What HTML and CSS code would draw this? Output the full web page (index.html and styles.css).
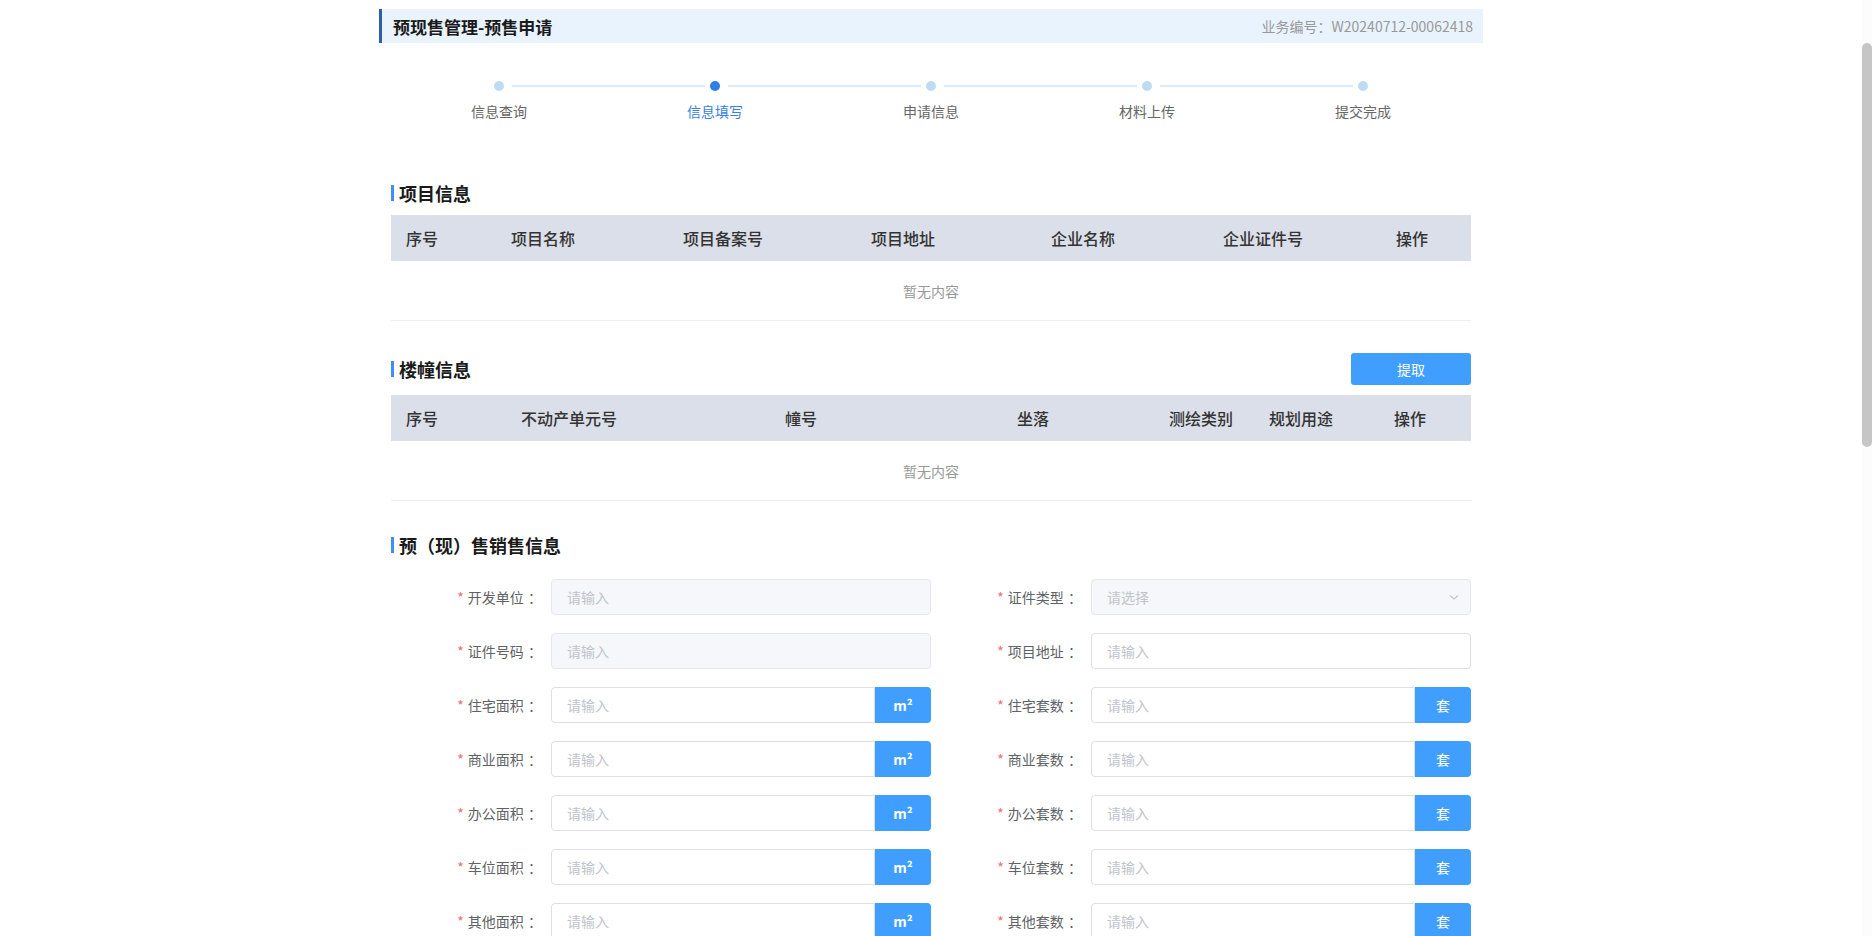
FILE: index.html
```html
<!DOCTYPE html>
<html lang="zh-CN">
<head>
<meta charset="utf-8">
<title>预现售管理-预售申请</title>
<link rel="stylesheet" href="styles.css">
</head>
<body>
<div class="app">
  <div class="page">
    <div class="top">
      <div class="titlebar">
        <div class="title">预现售管理-预售申请</div>
        <div class="bizno">业务编号：W20240712-00062418</div>
      </div>
    </div>
    <div class="scroll">
      <div class="main">
        <div class="steps">
          <div class="step"><span class="dot"></span><span class="label">信息查询</span></div>
          <div class="step active"><span class="dot"></span><span class="label">信息填写</span></div>
          <div class="step"><span class="dot"></span><span class="label">申请信息</span></div>
          <div class="step"><span class="dot"></span><span class="label">材料上传</span></div>
          <div class="step"><span class="dot"></span><span class="label">提交完成</span></div>
        </div>

        <section class="section first">
          <div class="sec-head"><h3 class="sec-title">项目信息</h3></div>
          <div class="table t1">
            <div class="thead">
              <div>序号</div><div>项目名称</div><div>项目备案号</div><div>项目地址</div><div>企业名称</div><div>企业证件号</div><div>操作</div>
            </div>
            <div class="empty">暂无内容</div>
          </div>
        </section>

        <section class="section">
          <div class="sec-head"><h3 class="sec-title">楼幢信息</h3><button class="btn">提取</button></div>
          <div class="table t2">
            <div class="thead">
              <div>序号</div><div>不动产单元号</div><div>幢号</div><div>坐落</div><div>测绘类别</div><div>规划用途</div><div>操作</div>
            </div>
            <div class="empty">暂无内容</div>
          </div>
        </section>

        <section class="section">
          <div class="sec-head"><h3 class="sec-title">预（现）售销售信息</h3></div>
          <div class="form">
            <div class="item"><label class="lbl"><span class="req">*</span>开发单位 <span class="colon">：</span></label><div class="ctl"><input class="inp" disabled placeholder="请输入"></div></div>
            <div class="item"><label class="lbl"><span class="req">*</span>证件类型 <span class="colon">：</span></label><div class="ctl"><div class="select"><span>请选择</span><svg class="chev" width="12" height="12" viewBox="0 0 12 12"><path d="M2 4.5 L6 8 L10 4.5" fill="none" stroke="#c0c4cc" stroke-width="1.1"/></svg></div></div></div>

            <div class="item"><label class="lbl"><span class="req">*</span>证件号码 <span class="colon">：</span></label><div class="ctl"><input class="inp" disabled placeholder="请输入"></div></div>
            <div class="item"><label class="lbl"><span class="req">*</span>项目地址 <span class="colon">：</span></label><div class="ctl"><input class="inp" placeholder="请输入"></div></div>

            <div class="item"><label class="lbl"><span class="req">*</span>住宅面积 <span class="colon">：</span></label><div class="ctl unit-ctl"><input class="inp" placeholder="请输入"><span class="unit sq">m²</span></div></div>
            <div class="item"><label class="lbl"><span class="req">*</span>住宅套数 <span class="colon">：</span></label><div class="ctl unit-ctl"><input class="inp" placeholder="请输入"><span class="unit">套</span></div></div>

            <div class="item"><label class="lbl"><span class="req">*</span>商业面积 <span class="colon">：</span></label><div class="ctl unit-ctl"><input class="inp" placeholder="请输入"><span class="unit sq">m²</span></div></div>
            <div class="item"><label class="lbl"><span class="req">*</span>商业套数 <span class="colon">：</span></label><div class="ctl unit-ctl"><input class="inp" placeholder="请输入"><span class="unit">套</span></div></div>

            <div class="item"><label class="lbl"><span class="req">*</span>办公面积 <span class="colon">：</span></label><div class="ctl unit-ctl"><input class="inp" placeholder="请输入"><span class="unit sq">m²</span></div></div>
            <div class="item"><label class="lbl"><span class="req">*</span>办公套数 <span class="colon">：</span></label><div class="ctl unit-ctl"><input class="inp" placeholder="请输入"><span class="unit">套</span></div></div>

            <div class="item"><label class="lbl"><span class="req">*</span>车位面积 <span class="colon">：</span></label><div class="ctl unit-ctl"><input class="inp" placeholder="请输入"><span class="unit sq">m²</span></div></div>
            <div class="item"><label class="lbl"><span class="req">*</span>车位套数 <span class="colon">：</span></label><div class="ctl unit-ctl"><input class="inp" placeholder="请输入"><span class="unit">套</span></div></div>

            <div class="item"><label class="lbl"><span class="req">*</span>其他面积 <span class="colon">：</span></label><div class="ctl unit-ctl"><input class="inp" placeholder="请输入"><span class="unit sq">m²</span></div></div>
            <div class="item"><label class="lbl"><span class="req">*</span>其他套数 <span class="colon">：</span></label><div class="ctl unit-ctl"><input class="inp" placeholder="请输入"><span class="unit">套</span></div></div>
          </div>
        </section>
      </div>
    </div>
  </div>
  <div class="rail"><div class="thumb"></div></div>
</div>
</body>
</html>
```
FILE: styles.css
```css
html, body {
  margin: 0;
  height: 100%;
}
body {
  font-family: "Noto Sans CJK SC", "Noto Sans", sans-serif;
  color: #333;
  background: #fff;
  overflow: hidden;
}
.app {
  height: 100vh;
  display: flex;
}
.page {
  flex: 1;
  min-width: 0;
  display: flex;
  flex-direction: column;
}
.rail {
  flex: none;
  width: 10px;
  padding-top: 43px;
  box-sizing: border-box;
  background: #fcfcfc;
}
.thumb {
  height: 404px;
  border-radius: 5px;
  background: #c6c6c6;
}
.top {
  flex: none;
  height: 43px;
  padding-top: 9px;
  box-sizing: border-box;
}
.titlebar {
  width: 1104px;
  height: 34px;
  margin: 0 auto;
  box-sizing: border-box;
  background: #e8f3fe;
  border-left: 3px solid #2d5ea9;
  padding: 0 10px 0 11px;
  display: flex;
  align-items: center;
  justify-content: space-between;
}
.title {
  font-size: 17px;
  font-weight: 700;
  color: #1a1a1a;
}
.bizno {
  font-size: 14px;
  color: #999;
}
.scroll {
  flex: 1;
  overflow: hidden;
}
.main {
  width: 1104px;
  margin: 0 auto;
  padding: 0 12px;
  box-sizing: border-box;
}

/* steps */
.steps {
  display: flex;
  padding-top: 38px;
}
.step {
  flex: 1;
  position: relative;
  display: flex;
  flex-direction: column;
  align-items: center;
}
.step .dot {
  width: 10px;
  height: 10px;
  border-radius: 50%;
  background: #bcdcf6;
}
.step .label {
  margin-top: 10px;
  font-size: 14px;
  line-height: 20px;
  color: #666;
}
.step.active .dot {
  background: #2f7fe8;
}
.step.active .label {
  color: #3a7fdf;
}
.step:not(:last-child)::after {
  content: "";
  position: absolute;
  top: 4px;
  height: 2px;
  left: calc(50% + 13px);
  right: calc(-50% + 10px);
  background: #deebf6;
}

/* sections */
.section {
  margin-top: 32px;
}
.section.first {
  margin-top: 60px;
}
.sec-head {
  display: flex;
  align-items: center;
  justify-content: space-between;
  margin-bottom: 10px;
  min-height: 24px;
}
.sec-title {
  margin: 0;
  display: flex;
  align-items: center;
  font-size: 18px;
  line-height: 24px;
  font-weight: 700;
  color: #1a1a1a;
}
.sec-title::before {
  content: "";
  width: 3px;
  height: 16px;
  background: #3f8ef0;
  margin-right: 5px;
}
.btn {
  width: 120px;
  height: 32px;
  border: 0;
  border-radius: 3px;
  background: #409eff;
  color: #fff;
  font-size: 14px;
  font-family: inherit;
  cursor: pointer;
}

/* tables */
.table {
  border-bottom: 1px solid #ebeef5;
}
.thead {
  display: grid;
  height: 46px;
  align-items: center;
  background: #dadfe9;
  text-align: center;
  font-size: 16px;
  font-weight: 500;
  color: #333;
}
.t1 .thead {
  grid-template-columns: 62px repeat(5, 180px) 1fr;
}
.t2 .thead {
  grid-template-columns: 62px repeat(3, 232px) 104px 96px 1fr;
}
.empty {
  height: 59px;
  display: flex;
  align-items: center;
  justify-content: center;
  font-size: 14px;
  color: #999;
}

/* form */
.form {
  display: grid;
  grid-template-columns: 540px 540px;
  row-gap: 18px;
  padding-top: 12px;
}
.item {
  display: grid;
  grid-template-columns: 160px 380px;
  align-items: center;
}
.lbl {
  text-align: right;
  padding-right: 9px;
  font-size: 14px;
  color: #606266;
}
.colon {
  margin-left: 1px;
}
.req {
  color: #f56c6c;
  margin-right: 4px;
}
.ctl {
  display: flex;
  height: 36px;
}
.inp {
  flex: 1;
  min-width: 0;
  height: 36px;
  box-sizing: border-box;
  border: 1px solid #dcdfe6;
  border-radius: 4px;
  padding: 0 15px;
  font-size: 14px;
  font-family: inherit;
  color: #606266;
  background: #fff;
  outline: none;
}
.inp::placeholder {
  color: #c0c4cc;
}
.inp:disabled {
  background: #f5f7fa;
  border-color: #e4e7ed;
}
.unit-ctl .inp {
  border-radius: 4px 0 0 4px;
}
.unit {
  width: 56px;
  flex: none;
  display: flex;
  align-items: center;
  justify-content: center;
  background: #409eff;
  color: #fff;
  font-size: 14px;
  border-radius: 0 4px 4px 0;
}
.unit.sq {
  font-weight: 700;
}
.select {
  flex: 1;
  display: flex;
  align-items: center;
  justify-content: space-between;
  box-sizing: border-box;
  border: 1px solid #e4e7ed;
  border-radius: 4px;
  background: #f5f7fa;
  padding: 0 10px 0 15px;
  font-size: 14px;
  color: #c0c4cc;
}
```
